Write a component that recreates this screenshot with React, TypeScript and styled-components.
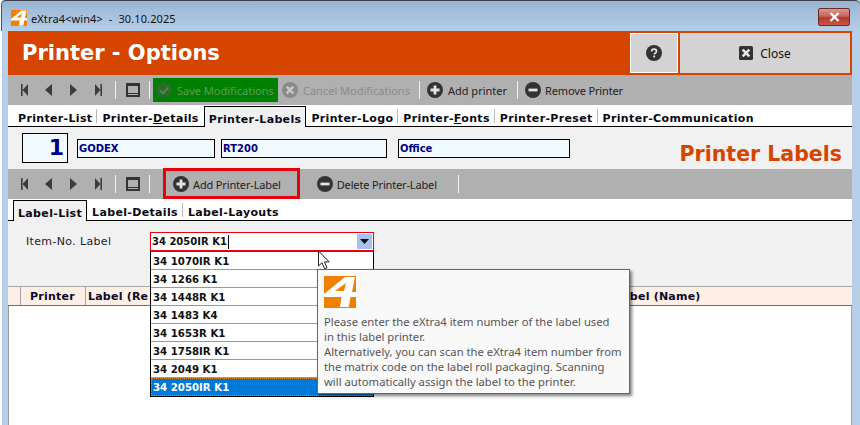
import React from "react";
import styled, { createGlobalStyle } from "styled-components";

const Global = createGlobalStyle`
  html, body { margin: 0; padding: 0; width: 860px; height: 425px; overflow: hidden; background: #fff; }
  #root { width: 860px; height: 425px; }
  * { box-sizing: border-box; }
`;

const ui = `"Noto Sans", "DejaVu Sans", sans-serif`;
const heavy = `"DejaVu Sans", "Liberation Sans", sans-serif`;

const Win = styled.div`
  position: relative;
  width: 860px;
  height: 425px;
  overflow: hidden;
  display: flex;
  flex-direction: column;
  padding: 0 8px;
  background: linear-gradient(90deg, #fff 0 2px, #b5cfe9 2px);
`;
const TitleBar = styled.div`
  height: 31px;
  margin: 0 -8px 0 -7px;
  padding: 4px 10px 0 9px;
  display: flex;
  align-items: center;
  gap: 4px;
  border-top: 1px solid #3a3f45;
  border-left: 1px solid #4a5058;
  border-radius: 5px 5px 0 0;
  background: linear-gradient(#9ab4d3, #b5cfe9);
  font: 11px ${ui};
  letter-spacing: 0.01em;
  color: #111;
`;
const TitleText = styled.span`
  flex: 1;
  white-space: pre;
`;
const WinClose = styled.div`
  width: 32px;
  height: 18px;
  margin-top: -2px;
  border: 1px solid #6b2b24;
  border-radius: 2px;
  background: linear-gradient(#d99a90 0%, #c9625a 45%, #b23a2c 55%, #c8584a 100%);
  display: flex;
  align-items: center;
  justify-content: center;
`;
const Header = styled.div`
  height: 44px;
  background: #d64500;
  display: flex;
  align-items: center;
  padding: 2px 2px 2px 14px;
`;
const PageTitle = styled.div`
  flex: 1;
  font: bold 21px ${heavy};
  color: #fff;
`;
const HeadButton = styled.div<{ $w: number; $focus?: boolean }>`
  width: ${(p) => p.$w}px;
  height: 40px;
  margin-left: 2px;
  background: #d3d3d3;
  border: 1px solid ${(p) => (p.$focus ? "#fff" : "#d3d3d3")};
  display: flex;
  align-items: center;
  justify-content: center;
  gap: 7px;
  font: 12px ${ui};
  color: #111;
`;
const Toolbar = styled.div`
  height: 30px;
  background: #b0b0b0;
  display: flex;
  align-items: center;
  padding-left: 4px;
  flex: none;
`;
const NavBtn = styled.div<{ $w: number }>`
  width: ${(p) => p.$w}px;
  height: 24px;
  display: flex;
  align-items: center;
  justify-content: center;
`;
const Sep = styled.div<{ $l?: number }>`
  width: 1px;
  height: 18px;
  background: #f2f2f2;
  margin-left: ${(p) => p.$l ?? 0}px;
  flex: none;
`;
const PageIconWrap = styled.div`
  width: 33px;
  display: flex;
  justify-content: center;
`;
const Action = styled.div<{
  $w?: number;
  $l?: number;
  $bg?: string;
  $color?: string;
  $pad?: number;
  $h?: number;
  $tight?: boolean;
}>`
  position: relative;
  display: flex;
  align-items: center;
  gap: ${(p) => (p.$tight ? 4 : 5)}px;
  flex: none;
  white-space: nowrap;
  padding-left: ${(p) => p.$pad ?? 3}px;
  height: ${(p) => p.$h ?? 24}px;
  width: ${(p) => (p.$w ? p.$w + "px" : "auto")};
  margin-left: ${(p) => p.$l ?? 0}px;
  background: ${(p) => p.$bg ?? "transparent"};
  color: ${(p) => p.$color ?? "#222"};
  font: 11px ${ui};
  letter-spacing: ${(p) => (p.$tight ? "-0.15px" : "0")};
`;
const RedBox = styled.div`
  position: absolute;
  left: -3px;
  top: -1px;
  width: 137px;
  height: 31px;
  border: 3px solid #e8000b;
`;
const Tabs = styled.div<{ $h: number; $pad: number }>`
  height: ${(p) => p.$h}px;
  flex: none;
  background: #fff;
  border-bottom: 1px solid #000;
  display: flex;
  align-items: flex-end;
  padding-left: ${(p) => p.$pad}px;
`;
const Tab = styled.div<{ $active?: boolean; $sep?: boolean }>`
  position: relative;
  height: ${(p) => (p.$active ? "21px" : "20px")};
  margin-bottom: ${(p) => (p.$active ? "-1px" : "0")};
  padding: ${(p) => (p.$active ? "4px 4px 0" : "5px 5px 0")};
  display: flex;
  align-items: center;
  font: bold 11px ${heavy};
  letter-spacing: 0.34px;
  color: #0a0a14;
  white-space: nowrap;
  background: ${(p) => (p.$active ? "#f1f1f1" : "transparent")};
  border: ${(p) => (p.$active ? "1px solid #000" : "0")};
  border-bottom: 0;
  ${(p) =>
    p.$sep &&
    `&::after{content:"";position:absolute;right:0;top:3px;width:1px;height:14px;background:#bbb;}`}
`;
const Body = styled.div`
  flex: 1;
  display: flex;
  flex-direction: column;
  background: #f1f1f1;
  min-height: 0;
`;
const InfoRow = styled.div`
  height: 42px;
  flex: none;
  display: flex;
  align-items: center;
  padding: 0 10px 0 14px;
`;
const NumberBox = styled.div`
  width: 46px;
  height: 30px;
  margin-right: 9px;
  border: 1px solid #000;
  background: #f0faff;
  color: #00007f;
  font: bold 22px ${heavy};
  text-align: right;
  padding: 0 3px;
  line-height: 28px;
`;
const Field = styled.div<{ $w: number; $r: number }>`
  width: ${(p) => p.$w}px;
  height: 19px;
  margin-right: ${(p) => p.$r}px;
  border: 1px solid #000;
  background: #f0faff;
  color: #00007f;
  font: bold 10px/18px ${heavy};
  padding-left: 1px;
`;
const SectionTitle = styled.div`
  margin-left: auto;
  font: bold 20.5px ${heavy};
  color: #d64500;
  padding-top: 12px;
`;
const FormArea = styled.div`
  height: 65px;
  flex: none;
  display: flex;
  padding: 11px 0 0 18px;
`;
const FieldLabel = styled.div`
  width: 124px;
  font: 11px/19px ${heavy};
  letter-spacing: 0.35px;
  color: #222;
`;
const Combo = styled.div`
  width: 224px;
  height: 19px;
  background: #fff;
  border: 1px solid #e8000b;
  display: flex;
  align-items: center;
  justify-content: space-between;
  padding: 0 1px 0 1px;
  font: bold 10px ${heavy};
  color: #111;
`;
const Caret = styled.span`
  display: inline-block;
  width: 1px;
  height: 14px;
  background: #000;
  margin-left: 1px;
  vertical-align: middle;
`;
const ComboBtn = styled.div`
  width: 15px;
  height: 15px;
  background: #a8c2f0;
  display: flex;
  align-items: center;
  justify-content: center;
`;
const TableHead = styled.div`
  height: 20px;
  flex: none;
  display: grid;
  grid-template-columns: 13px 65px 1fr 239px;
  background: #fdeee6;
  border-top: 1px solid #a5a5a5;
  border-bottom: 1px solid #6e6e6e;
  font: bold 11px/20px ${heavy};
  letter-spacing: 0.02em;
  color: #0a0a28;
`;
const HeadCell = styled.div<{ $first?: boolean }>`
  border-right: 1px solid #a5a5a5;
  padding-left: ${(p) => (p.$first ? 9 : 2)}px;
  white-space: nowrap;
  overflow: hidden;
  &:last-child { border-right: 0; }
`;
const TableBody = styled.div`
  flex: 1;
  background: #fff;
  border-right: 1px solid #a5a5a5;
  border-left: 1px solid #9a9a9a;
`;
const Dropdown = styled.div`
  position: absolute;
  left: 150px;
  top: 250px;
  width: 224px;
  height: 147px;
  background: #fff;
  border: 1px solid #000;
  border-top: 2px solid #e8000b;
  border-bottom-width: 2px;
`;
const DropRow = styled.div<{ $sel?: boolean }>`
  height: 18px;
  font: bold 10.2px/17px ${heavy};
  padding: 1px 0 0 2px;
  color: ${(p) => (p.$sel ? "#fff" : "#111")};
  background: ${(p) => (p.$sel ? "#0078d7" : "#fff")};
  border-bottom: 1px solid #999;
  ${(p) => p.$sel && `outline: 1px dotted #e08a30; outline-offset: -1px; border-bottom: 0;`}
`;
const Tip = styled.div`
  position: absolute;
  left: 317px;
  top: 269px;
  width: 313px;
  height: 125px;
  background: #f9f9f9;
  border: 1px solid #666;
  box-shadow: 2px 2px 3px rgba(0, 0, 0, 0.5);
  padding: 6px 0 0 6px;
`;
const TipText = styled.div`
  margin-top: 6px;
  font: 11.25px/15px ${ui};
  color: #555;
  white-space: pre;
`;
const Pointer = styled.svg`
  position: absolute;
  left: 317px;
  top: 250px;
`;

const Logo = ({ s }: { s: number }) => (
  <svg width={s} height={s} viewBox="0 0 32 32" style={{ display: "block", flex: "none" }}>
    <rect width="32" height="32" fill="#f08000" />
    <path
      d="M21 1H31L28 16h4v5h-5.5L24.8 31H16l1.5-10H0v-3zM11 15h9l2-8z"
      fill="#fff"
      fillRule="evenodd"
    />
  </svg>
);
const Nav = ({ d }: { d: "first" | "prev" | "next" | "last" }) => {
  const path = {
    first: "M0 0h1.6v12H0zM7 0v12L1.6 6z",
    prev: "M7 0v12L0 6z",
    next: "M0 0v12l7-6z",
    last: "M0 0v12l5.4-6zM5.4 0H7v12H5.4z",
  }[d];
  return (
    <svg width="7" height="12" viewBox="0 0 7 12">
      <path d={path} fill="#3c3c3c" />
    </svg>
  );
};
const PageIcon = () => (
  <svg width="14" height="14" viewBox="0 0 14 14">
    <rect width="14" height="14" fill="#333" />
    <rect x="2" y="3" width="10" height="7" fill="#b0b0b0" />
    <rect x="2" y="11" width="10" height="1" fill="#b0b0b0" />
  </svg>
);
type Kind = "plus" | "minus" | "check" | "x" | "q";
const Round = ({ k, s = 16, fill = "#333", mark = "#e4e4e4" }: { k: Kind; s?: number; fill?: string; mark?: string }) => (
  <svg width={s} height={s} viewBox="0 0 16 16" style={{ flex: "none" }}>
    <circle cx="8" cy="8" r="8" fill={fill} />
    {k === "plus" && <path d="M3.5 6.6h3.1V3.5h2.8v3.1h3.1v2.8H9.4v3.1H6.6V9.4H3.5z" fill={mark} />}
    {k === "minus" && <rect x="3.5" y="6.6" width="9" height="2.8" fill={mark} />}
    {k === "check" && <path d="M3.8 8.2 7 11.4l5.4-6" fill="none" stroke={mark} strokeWidth="1.8" />}
    {k === "x" && <path d="M4.7 4.7l6.6 6.6M11.3 4.7l-6.6 6.6" stroke={mark} strokeWidth="2.6" />}
    {k === "q" && (
      <path
        d="M5.6 6.4c0-1.5 1.1-2.3 2.5-2.3s2.4.8 2.4 2.1c0 1.9-2.2 1.8-2.2 3.4"
        fill="none"
        stroke={mark}
        strokeWidth="1.7"
      />
    )}
    {k === "q" && <rect x="7.3" y="10.6" width="1.8" height="1.8" fill={mark} />}
  </svg>
);
const NavSet = () => (
  <>
    <NavBtn $w={24}><Nav d="first" /></NavBtn>
    <NavBtn $w={25}><Nav d="prev" /></NavBtn>
    <NavBtn $w={25}><Nav d="next" /></NavBtn>
    <NavBtn $w={24}><Nav d="last" /></NavBtn>
    <Sep $l={5} />
    <PageIconWrap><PageIcon /></PageIconWrap>
    <Sep />
  </>
);

const items = [
  "34 1070IR K1",
  "34 1266 K1",
  "34 1448R K1",
  "34 1483 K4",
  "34 1653R K1",
  "34 1758IR K1",
  "34 2049 K1",
];

export default function App() {
  return (
    <Win>
      <Global />
      <TitleBar>
        <Logo s={16} />
        <TitleText>eXtra4{"<win4>"}  -  30.10.2025</TitleText>
        <WinClose>
          <svg width="11" height="10" viewBox="0 0 11 10">
            <path d="M1.5 1l8 8M9.5 1l-8 8" stroke="#fff" strokeWidth="2.4" />
          </svg>
        </WinClose>
      </TitleBar>
      <Header>
        <PageTitle>Printer - Options</PageTitle>
        <HeadButton $w={48} $focus>
          <Round k="q" />
        </HeadButton>
        <HeadButton $w={170}>
          <svg width="14" height="14" viewBox="0 0 14 14">
            <rect width="14" height="14" rx="1.5" fill="#333" />
            <path d="M3.7 3.7l6.6 6.6M10.3 3.7l-6.6 6.6" stroke="#e8e8e8" strokeWidth="2.6" />
          </svg>
          Close
        </HeadButton>
      </Header>
      <Toolbar>
        <NavSet />
        <Action $w={125} $l={3} $bg="#008000" $color="#5c9c5c">
          <Round k="check" fill="#2a6a2a" mark="#4b8f4b" />
          Save Modifications
        </Action>
        <Action $l={1} $color="#8a8a8a">
          <Round k="x" fill="#8a8a8a" mark="#c6c6c6" />
          Cancel Modifications
        </Action>
        <Sep $l={9} />
        <Action $l={4}>
          <Round k="plus" />
          Add printer
        </Action>
        <Sep $l={10} />
        <Action $l={4} $tight>
          <Round k="minus" />
          Remove Printer
        </Action>
      </Toolbar>
      <Tabs $h={22} $pad={5}>
        <Tab $sep>Printer-List</Tab>
        <Tab>
          <span>Printer-<u>D</u>etails</span>
        </Tab>
        <Tab $active>Printer-Labels</Tab>
        <Tab $sep>Printer-Logo</Tab>
        <Tab $sep>
          <span>Printer-<u>F</u>onts</span>
        </Tab>
        <Tab $sep>Printer-Preset</Tab>
        <Tab>Printer-Communication</Tab>
      </Tabs>
      <Body>
        <InfoRow>
          <NumberBox>1</NumberBox>
          <Field $w={138} $r={6}>GODEX</Field>
          <Field $w={166} $r={11}>RT200</Field>
          <Field $w={172} $r={0}>Office</Field>
          <SectionTitle>Printer Labels</SectionTitle>
        </InfoRow>
        <Toolbar>
          <NavSet />
          <Action $l={16} $h={30} $pad={7} $tight>
            <RedBox />
            <Round k="plus" />
            Add Printer-Label
          </Action>
          <Action $l={33} $tight>
            <Round k="minus" />
            Delete Printer-Label
          </Action>
          <Sep $l={21} />
        </Toolbar>
        <Tabs $h={22} $pad={5}>
          <Tab $active>Label-List</Tab>
          <Tab $sep>Label-Details</Tab>
          <Tab>Label-Layouts</Tab>
        </Tabs>
        <FormArea>
          <FieldLabel>Item-No. Label</FieldLabel>
          <Combo>
            <span>
              34 2050IR K1<Caret />
            </span>
            <ComboBtn>
              <svg width="9" height="5" viewBox="0 0 9 5">
                <path d="M0 0h9L4.5 5z" fill="#111" />
              </svg>
            </ComboBtn>
          </Combo>
        </FormArea>
        <TableHead>
          <HeadCell />
          <HeadCell $first>Printer</HeadCell>
          <HeadCell>Label (Re</HeadCell>
          <HeadCell>Label (Name)</HeadCell>
        </TableHead>
        <TableBody />
      </Body>
      <Dropdown>
        {items.map((t) => (
          <DropRow key={t}>{t}</DropRow>
        ))}
        <DropRow $sel>34 2050IR K1</DropRow>
      </Dropdown>
      <Pointer width="14" height="20" viewBox="0 0 14 20">
        <path d="M1.5 1v15l3.5-3.3 2.6 6 2.4-1-2.6-5.8h4.8z" fill="#fff" stroke="#222" strokeWidth="1" />
      </Pointer>
      <Tip>
        <Logo s={32} />
        <TipText>
          {`Please enter the eXtra4 item number of the label used
in this label printer.
Alternatively, you can scan the eXtra4 item number from
the matrix code on the label roll packaging. Scanning
will automatically assign the label to the printer.`}
        </TipText>
      </Tip>
    </Win>
  );
}
